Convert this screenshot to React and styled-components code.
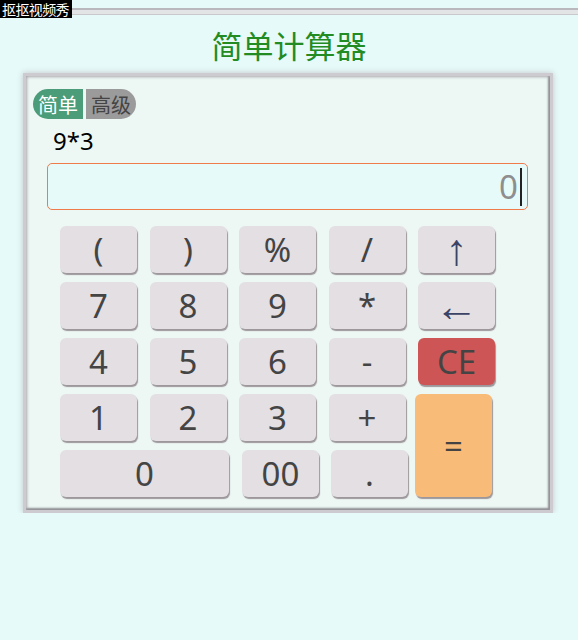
import React, { useState } from "react";
import styled, { createGlobalStyle } from "styled-components";

const GlobalStyle = createGlobalStyle`
  html, body {
    margin: 0;
    padding: 0;
    background: #e6fafa;
  }
  body {
    font-family: "Noto Sans", "Noto Sans CJK SC", sans-serif;
  }
`;

const TopBar = styled.div`
  display: flex;
  align-items: flex-start;
  height: 18px;
`;

const Badge = styled.div`
  background: #000;
  color: #fff;
  font-family: "Noto Sans CJK SC", sans-serif;
  font-size: 14px;
  line-height: 18px;
  padding: 0 2px;
  width: 68px;
  white-space: nowrap;
  letter-spacing: -0.6px;
  overflow: hidden;
`;

const Rule = styled.div`
  flex: 1;
  margin-top: 8px;
  height: 4px;
  border-top: 2px solid #b9b9bd;
  border-bottom: 1px solid #c9c9cc;
  background: #e2e4e6;
`;

const Title = styled.h1`
  margin: 9px 0 10px;
  text-align: center;
  font-family: "Noto Sans CJK SC", sans-serif;
  font-weight: 400;
  font-size: 31px;
  line-height: 36px;
  color: #228b22;
`;

const Panel = styled.div`
  box-sizing: border-box;
  margin-left: 23px;
  width: 530px;
  height: 440px;
  padding: 13px 0 0 7px;
  background: #edf7f4;
  border: 3px solid #cdcbcf;
  box-shadow: 0 0 6px #c4c4c8, inset 1px 1px 3px #a9a7ab, inset -2px -2px 2px #8f8d91;
`;

const Tabs = styled.div`
  display: flex;
  gap: 3px;
`;

const Tab = styled.div`
  width: 50px;
  height: 30px;
  box-sizing: border-box;
  display: flex;
  align-items: center;
  justify-content: center;
  font-family: "Noto Sans CJK SC", sans-serif;
  font-size: 20px;
  background: ${(p) => (p.$active ? "#4b9c78" : "#9c9b9c")};
  color: ${(p) => (p.$active ? "#fff" : "#444")};
  border-radius: ${(p) => (p.$first ? "15px 0 0 15px" : "0 15px 15px 0")};
  cursor: pointer;
`;

const Expr = styled.div`
  margin: 5px 0 0 20px;
  height: 39px;
  font-size: 24px;
  line-height: 34px;
  color: #000;
`;

const Screen = styled.div`
  box-sizing: border-box;
  margin-left: 14px;
  width: 481px;
  height: 47px;
  border: 1px solid #f07a4a;
  border-radius: 5px;
  background: #e7fafa;
  display: flex;
  align-items: center;
  justify-content: flex-end;
  padding-right: 5px;
  font-size: 33px;
  color: #8e8e8e;
`;

const Caret = styled.span`
  display: inline-block;
  width: 2px;
  height: 38px;
  margin-left: 2px;
  background: #222;
`;

const Keypad = styled.div`
  margin: 16px 0 0 27px;
  display: flex;
  flex-direction: column;
  gap: 9px;
`;

const Grid = styled.div`
  display: grid;
  grid-template-columns: repeat(${(p) => p.$cols}, 77px);
  grid-auto-rows: 47px;
  column-gap: 12.5px;
  row-gap: 9px;
`;

const Lower = styled.div`
  display: flex;
  gap: 7px;
`;

const LeftBlock = styled.div`
  width: 348px;
  display: flex;
  flex-direction: column;
  gap: 9px;
`;

const LastRow = styled.div`
  display: flex;
  height: 47px;
`;

const palette = {
  plain: "#e3dfe3",
  danger: "#cd5555",
  accent: "#f8bb78",
};

const Key = styled.button`
  box-sizing: border-box;
  width: ${(p) => p.$w || 77}px;
  height: ${(p) => p.$h || 47}px;
  margin-left: ${(p) => p.$ml || 0}px;
  border: none;
  border-radius: 6px;
  padding: 0;
  background: ${(p) => palette[p.$kind || "plain"]};
  box-shadow: 1px 2px 1px #9d979b;
  color: ${(p) => (p.$arrow ? "#3b4466" : "#444")};
  font-family: ${(p) => (p.$arrow ? '"Liberation Sans", sans-serif' : '"Noto Sans", sans-serif')};
  font-size: ${(p) => (p.$arrow ? 44 : 33)}px;
  line-height: 1;
  cursor: pointer;
`;

const topKeys = [
  "(", ")", "%", "/", "↑",
  "7", "8", "9", "*", "←",
  "4", "5", "6", "-", "CE",
];

export default function App() {
  const [mode, setMode] = useState("simple");

  return (
    <>
      <GlobalStyle />
      <TopBar>
        <Badge>抠抠视频秀</Badge>
        <Rule />
      </TopBar>
      <Title>简单计算器</Title>
      <Panel>
        <Tabs>
          <Tab $first $active={mode === "simple"} onClick={() => setMode("simple")}>简单</Tab>
          <Tab $active={mode === "advanced"} onClick={() => setMode("advanced")}>高级</Tab>
        </Tabs>
        <Expr>9*3</Expr>
        <Screen>
          0<Caret />
        </Screen>
        <Keypad>
          <Grid $cols={5}>
            {topKeys.map((k) => (
              <Key
                key={k}
                $kind={k === "CE" ? "danger" : "plain"}
                $arrow={k === "↑" || k === "←"}
              >
                {k}
              </Key>
            ))}
          </Grid>
          <Lower>
            <LeftBlock>
              <Grid $cols={4}>
                {["1", "2", "3", "+"].map((k) => (
                  <Key key={k}>{k}</Key>
                ))}
              </Grid>
              <LastRow>
                <Key $w={169}>0</Key>
                <Key $ml={13}>00</Key>
                <Key $ml={12}>.</Key>
              </LastRow>
            </LeftBlock>
            <Key $kind="accent" $h={103}>=</Key>
          </Lower>
        </Keypad>
      </Panel>
    </>
  );
}
